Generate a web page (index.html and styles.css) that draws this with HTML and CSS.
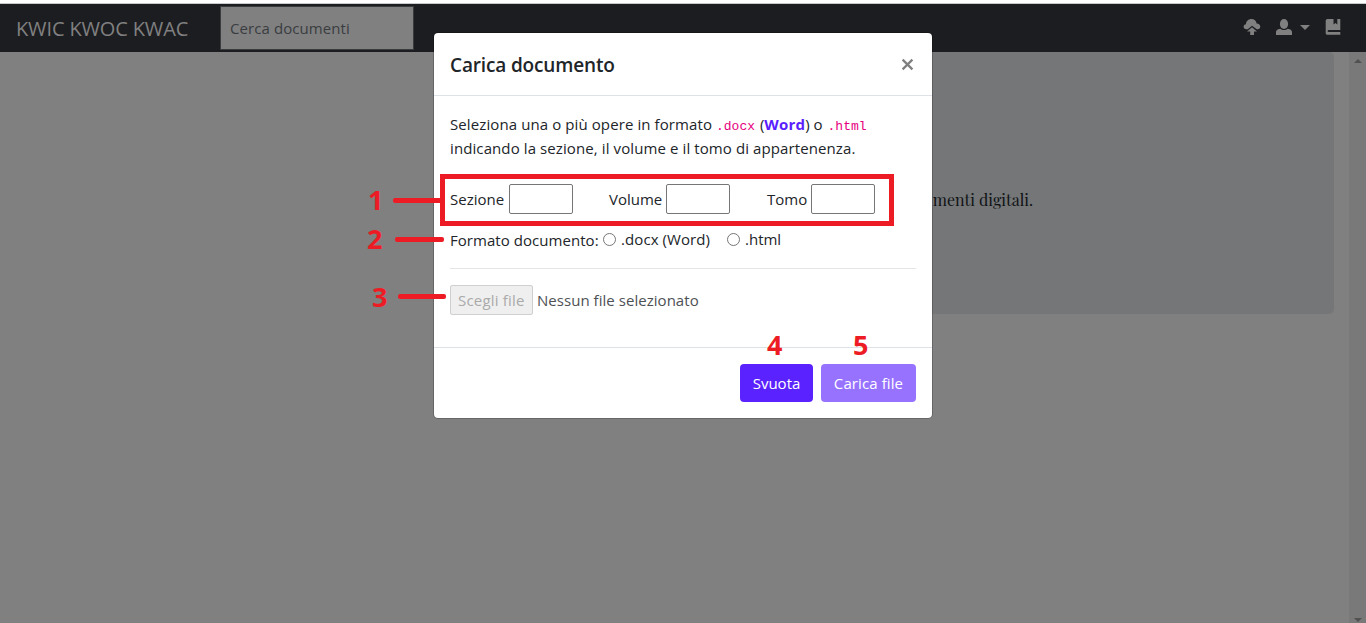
FILE: index.html
```html
<!DOCTYPE html>
<html lang="it">
<head>
<meta charset="utf-8">
<title>KWIC KWOC KWAC</title>
<link rel="stylesheet" href="styles.css">
</head>
<body>
<div class="page">
  <div class="topline"></div>
  <nav class="navbar">
    <span class="brand">KWIC KWOC KWAC</span>
    <div class="search"><span class="t-search">Cerca documenti</span></div>
    <div class="nav-icons">
      <svg class="ic-upload" width="18" height="18" viewBox="0 0 18 18"><path d="M3.300 11.200C1.700 11.200.6 10.200.6 8.800.6 7.400 1.500 6.400 3 6.200 3 3.200 5.500 1 8.500 1c2.700 0 4.700 1.700 5.100 4.400 2.300.2 3.700 1.400 3.700 3.200 0 1.600-1 2.600-2.500 2.600h-1L9 7.800 4.800 11.200z"/><path d="M9 9.200 14 13.400H11V16.900H7.200V13.400H4z"/></svg>
      <svg class="ic-user" width="18" height="18" viewBox="0 0 18 18"><ellipse cx="9" cy="6" rx="4.100" ry="5"/><path d="M1 17v-2.700c0-2 1.200-3 4.300-3.600 1 .9 2.300 1.400 3.700 1.400s2.700-.5 3.700-1.400c3.100.6 4.300 1.600 4.300 3.600V17z"/></svg>
      <span class="caret"></span>
      <svg class="ic-book" width="16" height="18" viewBox="0 0 16 18"><path d="M2.500 1H8.500v5.500l1.900-1.600 1.900 1.600V1H15.300v11H3.600c-1.300 0-1.300 2 0 2H15.300v2.800H2.500C1.300 16.800.7 16 .7 15V3C.7 1.800 1.400 1 2.500 1z"/></svg>
    </div>
  </nav>
  <div class="content">
    <main class="main"><div class="jumbotron"><span>menti digitali.</span></div></main>
    <div class="scrollbar"><i class="arrow up"></i><i class="arrow down"></i></div>
  </div>
</div>

<section class="modal">
  <header class="modal-header">
    <h5 class="title">Carica documento</h5>
    <svg class="close" width="13" height="13" viewBox="0 0 13 13"><path d="M1.600 1.600 11.400 11.400M11.400 1.600 1.600 11.400"/></svg>
  </header>
  <div class="modal-body">
    <p class="intro"><span class="t-intro1">Seleziona una o più opere in formato</span> <code>.docx</code> <span>(<b>Word</b>)</span> <span>o</span> <code class="last">.html</code><br><span class="t-intro2">indicando la sezione, il volume e il tomo di appartenenza.</span></p>
    <div class="fields">
      <label class="f1"><span>Sezione</span><i class="box"></i></label>
      <label class="f2"><span>Volume</span><i class="box"></i></label>
      <label class="f3"><span>Tomo</span><i class="box"></i></label>
    </div>
    <div class="formats">
      <span class="fmt-label">Formato documento:</span>
      <label class="opt-docx"><i class="radio"></i><span>.docx (Word)</span></label>
      <label class="opt-html"><i class="radio"></i><span>.html</span></label>
    </div>
    <div class="file"><span class="file-btn">Scegli file</span><span class="file-name">Nessun file selezionato</span></div>
  </div>
  <footer class="modal-footer">
    <button class="btn clear">Svuota</button>
    <button class="btn send">Carica file</button>
  </footer>
</section>

<div class="frame"></div>
<div class="num n1">1</div><div class="line l1"></div>
<div class="num n2">2</div><div class="line l2"></div>
<div class="num n3">3</div><div class="line l3"></div>
<div class="num n4">4</div>
<div class="num n5">5</div>
</body>
</html>
```

FILE: styles.css
```css
* { box-sizing: border-box; }
body {
  margin: 0;
  height: 623px;
  overflow: hidden;
  position: relative;
  background: #808080;
  color: #212529;
  font: 15px/24px "Open Sans", "Noto Sans", sans-serif;
}
span, button { white-space: nowrap; }
.page { display: flex; flex-direction: column; height: 623px; }
.topline { height: 4px; background: #fff; border-bottom: 1px solid #c9cacb; }
.navbar { display: flex; align-items: center; height: 48px; background: #1c1d20; padding-left: 16px; }
.brand { width: 204px; color: #808080; font-size: 20px; letter-spacing: -.14px; padding-top: 1px; }
.search { width: 194px; height: 44px; border: 1px solid #3a3b3d; background: #808080; color: #3a3d40; padding: 9px 9px; }
.t-search { letter-spacing: .08px; }
.nav-icons { display: flex; align-items: center; margin-left: auto; padding-right: 25px; height: 46px; margin-bottom: 2px; }
.nav-icons svg { display: block; fill: #808080; }
.ic-user { margin-left: 14px; }
.caret { margin-left: 7px; border: 5px solid transparent; border-top-color: #808080; border-bottom: 0; margin-right: 15px; }
.content { display: flex; flex: 1; }
.main { flex: 1; }
.jumbotron {
  margin-left: 620px;
  margin-right: 15px;
  height: 262px;
  background: #747678;
  border-radius: 0 5px 5px 0;
  padding: 136px 301px 0 0;
  text-align: right;
  color: #111315;
  font: 16px/24px "Playfair Display", "Liberation Serif", serif;
}
.scrollbar { width: 17px; background: #797979; display: flex; flex-direction: column; align-items: center; justify-content: space-between; padding: 7px 0 1px; }
.arrow { border: 4px solid transparent; }
.up { border-bottom-color: #515151; border-top: 0; }
.down { border-top-color: #515151; border-bottom: 0; }

.modal {
  position: absolute;
  left: 433px;
  top: 32px;
  width: 500px;
  height: 387px;
  background: #fff;
  background-clip: padding-box;
  border: 1px solid rgba(0, 0, 0, .2);
  border-radius: 5px;
}
.modal-header { display: flex; justify-content: space-between; height: 63px; padding: 17px 18px 0 16px; border-bottom: 1px solid #dee2e6; }
.title { margin: 0; font-size: 19px; line-height: 30px; font-weight: 600; letter-spacing: -.15px; }
.close { margin-top: 8px; stroke: #7f7f7f; stroke-width: 2.200; }
.modal-body { height: 251px; padding: 16px 16px 0; }
.intro { margin: 0; height: 48px; white-space: nowrap; }
.t-intro1 { letter-spacing: .1px; }
.t-intro2 { letter-spacing: .1px; }
code { font: 13px/16px "Liberation Mono", monospace; color: #e6007e; }
.t-intro1 + code { margin-right: 1px; }
.last { margin-left: 1px; }
b { color: #5a1eff; letter-spacing: .2px; }
.fields { display: flex; margin-top: 24px; height: 30px; line-height: 30px; }
.fields label { display: flex; justify-content: space-between; }
.f1 { width: 123px; }
.f2 { width: 121px; margin-left: 36px; }
.f3 { width: 108px; margin-left: 37px; }
.box { width: 64px; height: 30px; border: 1px solid #767676; border-radius: 2px; }
.formats { display: flex; margin-top: 13px; padding-bottom: 16px; height: 42px; border-bottom: 1px solid #e5e5e5; }
.fmt-label { width: 153px; padding-top: 1px; letter-spacing: .05px; }
.formats label { display: flex; }
.radio { width: 13px; height: 13px; border: 1px solid #767676; border-radius: 50%; margin: 6px 5px 0 0; }
.opt-docx { width: 124px; letter-spacing: .08px; }
.file { display: flex; margin-top: 16px; height: 30px; line-height: 30px; }
.file-btn { width: 83px; border: 1px solid #cfcfcf; border-radius: 2px; background: #efefef; color: #aaa; line-height: 28px; padding-left: 7px; margin-right: 4px; letter-spacing: .2px; }
.file-name { color: #4d5154; letter-spacing: .04px; }
.modal-footer { display: flex; justify-content: flex-end; gap: 8px; border-top: 1px solid #dee2e6; padding: 16px; }
.btn { height: 38px; border: 0; border-radius: 4px; color: #fff; font: inherit; padding: 0; text-align: center; }
.clear { width: 73px; background: #5a22ff; }
.send { width: 95px; background: #9672ff; letter-spacing: .1px; }

.frame { position: absolute; left: 440px; top: 174px; width: 454px; height: 52px; border: 5px solid #ed1c24; }
.line { position: absolute; height: 5px; width: 49px; border-radius: 2px; background: #ed1c24; }
.l1 { left: 393px; top: 198px; }
.l2 { left: 395px; top: 237px; }
.l3 { left: 398px; top: 294px; width: 48px; }
.num { position: absolute; color: #ed1c24; font: bold 27px/30px "Open Sans", sans-serif; }
.n1 { left: 368px; top: 185px; }
.n2 { left: 367px; top: 224px; }
.n3 { left: 372px; top: 282px; }
.n4 { left: 767px; top: 330px; }
.n5 { left: 853px; top: 330px; }
```
